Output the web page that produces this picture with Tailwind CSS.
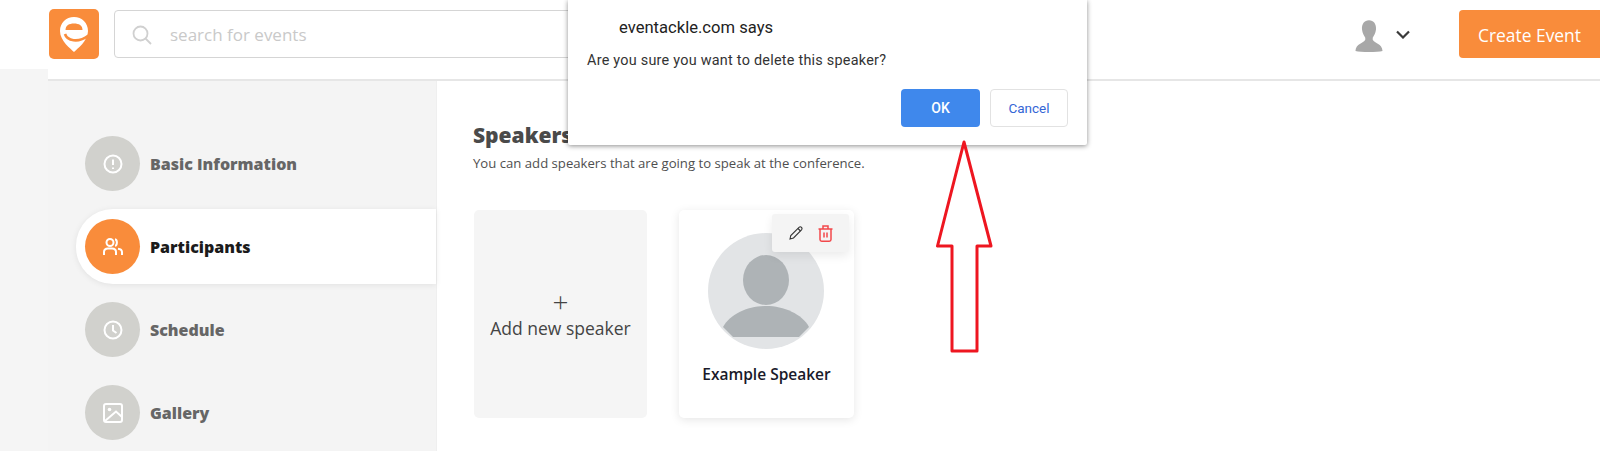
<!DOCTYPE html>
<html><head><meta charset="utf-8"><script src="https://cdn.jsdelivr.net/npm/@tailwindcss/browser@4"></script></head>
<body class="overflow-hidden">
<div class="relative flex w-[1600px] h-[451px] overflow-hidden bg-[#f5f5f5] font-['Open_Sans',sans-serif]">
  <div class="w-[48px] shrink-0"><div class="h-[69px] bg-white"></div></div>
  <div class="flex-1 flex flex-col min-w-0">
    <header class="h-[81px] shrink-0 bg-white border-b-2 border-[#e6e6e6] flex items-start pt-[10px]">
      <div class="w-[50px] h-[50px] mt-[-1px] ml-[1px] rounded-[5px] bg-[#f98c3b] flex items-center justify-center shrink-0">
        <svg width="28" height="35" viewBox="0 0 28 35"><path d="M14 35C11 32 0 24 0 14C0 6 6 0 14 0C22 0 28 6 28 14C28 24 17 32 14 35Z" fill="#fff"/><path d="M5.500 13C5.500 8.500 9 6.500 14 6.500C19 6.500 22.500 8.500 22.500 13Z" fill="#f98c3b"/><path d="M5 17C7 23.500 18 26.500 28.500 18.500" fill="none" stroke="#f98c3b" stroke-width="2.600"/></svg>
      </div>
      <div class="ml-[15px] w-[500px] h-[48px] border border-[#d5d5d5] rounded-[4px] flex items-center pl-[17px] pt-[2px] text-[17px] text-[#c9c9c9] shrink-0">
        <svg width="20" height="20" viewBox="0 0 20 20" fill="none" stroke="#d0d0d0" stroke-width="1.800"><circle cx="8.500" cy="8.500" r="7"/><path d="M13.500 13.500L19 19"/></svg>
        <span class="ml-[18px]">search for events</span>
      </div>
      <div class="ml-auto flex items-center h-[48px]">
        <svg width="28" height="34" viewBox="0 0 30 34" class="mt-[3px]"><path d="M15 0C20 0 23 4 22.500 10C22 14 20 17 19 19V21C21 25 29 25 29.500 33C24 34.500 6 34.500 .5 33C1 25 9 25 11 21V19C10 17 8 14 7.500 10C7 4 10 0 15 0Z" fill="#a8a8a8"/></svg>
        <svg width="14" height="9" viewBox="0 0 14 9" fill="none" stroke="#3a3a3a" stroke-width="2.200" class="ml-[13px]"><path d="M1 1.500L7 7.500L13 1.500"/></svg>
        <div class="ml-[49px] w-[141px] h-[48px] pt-[2px] bg-[#f98c3b] rounded-l-[4px] flex items-center justify-center text-white text-[17.400px]">Create Event</div>
      </div>
    </header>
    <div class="flex-1 flex min-h-0">
      <aside class="w-[388px] shrink-0 bg-[#f4f4f4] pt-[55px] pl-[28px] font-extrabold text-[16px] text-[#666]">
        <div class="flex flex-col gap-[28px]">
          <div class="flex items-center h-[55px] pl-[9px] gap-[10px]">
            <div class="w-[55px] h-[55px] rounded-full bg-[#d1d1cd] flex items-center justify-center"><svg width="20" height="20" viewBox="0 0 20 20" fill="none" stroke="#fff" stroke-width="2"><circle cx="10" cy="10" r="8.500"/><path d="M10 5.500V11M10 13.500V15"/></svg></div>
            <span>Basic Information</span>
          </div>
          <div class="relative flex items-center h-[55px] pl-[9px] gap-[10px] text-[#1b1b1b]">
            <div class="absolute left-0 right-0 top-[-10px] bottom-[-10px] bg-white rounded-l-[37px] shadow-[0_1px_6px_rgba(0,0,0,0.08)]"></div>
            <div class="relative w-[55px] h-[55px] rounded-full bg-[#f98c3b] flex items-center justify-center"><svg width="20" height="18" viewBox="0 0 20 18" fill="none" stroke="#fff" stroke-width="2"><circle cx="7" cy="4.500" r="3.500"/><path d="M1 17V14C1 11.500 3 10.500 5 10.500H9C11 10.500 13 11.500 13 14V17M12 1.200C14.500 1.500 14.500 7.500 12 7.800M15 10.700C17.500 11 19 12 19 14V17"/></svg></div>
            <span class="relative">Participants</span>
          </div>
          <div class="flex items-center h-[55px] pl-[9px] gap-[10px]">
            <div class="w-[55px] h-[55px] rounded-full bg-[#d1d1cd] flex items-center justify-center"><svg width="20" height="20" viewBox="0 0 20 20" fill="none" stroke="#fff" stroke-width="2"><circle cx="10" cy="10" r="8.500"/><path d="M10 5V10.500L13.500 13"/></svg></div>
            <span>Schedule</span>
          </div>
          <div class="flex items-center h-[55px] pl-[9px] gap-[10px]">
            <div class="w-[55px] h-[55px] rounded-full bg-[#d1d1cd] flex items-center justify-center"><svg width="20" height="20" viewBox="0 0 20 20" fill="none" stroke="#fff" stroke-width="2"><rect x="1" y="1" width="18" height="18" rx="2"/><circle cx="6.500" cy="6.500" r="1.800" fill="#fff" stroke="none"/><path d="M2 18L13 8.500L19 14"/></svg></div>
            <span>Gallery</span>
          </div>
        </div>
      </aside>
      <main class="flex-1 bg-white pl-[36px] pt-[40px] border-l border-[#efefef]">
        <h2 class="text-[21px] leading-[28px] font-extrabold text-[#4a4a4a]">Speakers</h2>
        <p class="mt-[5px] text-[13.150px] leading-[19px] text-[#4f4f4f]">You can add speakers that are going to speak at the conference.</p>
        <div class="mt-[37px] flex gap-[32px] pl-px">
          <div class="w-[173px] h-[208px] rounded-[5px] bg-[#f5f5f5] flex flex-col items-center justify-center text-[#444]">
            <span class="text-[28px] leading-[20px] font-light pt-[3px]">+</span>
            <span class="text-[17.500px] leading-[24px] mt-[5px]">Add new speaker</span>
          </div>
          <div class="relative w-[175px] h-[208px] rounded-[5px] bg-white shadow-[0_2px_10px_rgba(0,0,0,0.1)] flex flex-col items-center">
            <div class="mt-[23px] mr-[2px] w-[116px] h-[116px] rounded-full bg-[#e2e4e6] overflow-hidden">
              <svg width="116" height="116" viewBox="0 0 116 116"><ellipse cx="58" cy="47" rx="23" ry="25" fill="#aeb3b6"/><path d="M15 94C22 81 40 73 58 73C76 73 94 81 101 94L91 104H25Z" fill="#aeb3b6"/></svg>
            </div>
            <div class="mt-[14px] text-[15.500px] leading-[22px] font-semibold text-[#1a1a2a]">Example Speaker</div>
            <div class="absolute left-[93px] top-[4px] w-[77px] h-[38px] rounded-[3px] bg-[#f4f4f4] shadow-[0_4px_10px_rgba(0,0,0,0.08)] flex items-center justify-center gap-[15px]">
              <svg width="14" height="14" viewBox="0 0 14 14" fill="none" stroke="#333" stroke-width="1.100"><path d="M1 13L1.800 9.500L10 1.300C10.800 .6 11.800 .6 12.500 1.400C13.200 2.200 13.200 3 12.500 3.800L4.500 12Z"/><path d="M9 2.500L11.500 5"/></svg>
              <svg width="15" height="17" viewBox="0 0 15 17" fill="none" stroke="#f2484b" stroke-width="1.500"><path d="M0.500 4H14.500M5 4V1H10V4M2 4V14.500C2 15.500 2.700 16.200 3.700 16.200H11.300C12.300 16.200 13 15.500 13 14.500V4M6 7.500V12.500M9 7.500V12.500"/></svg>
            </div>
          </div>
        </div>
      </main>
    </div>
  </div>
  <div class="absolute left-[568px] top-0 w-[519px] h-[145px] bg-white rounded-b-[2px] shadow-[0_1px_5px_rgba(0,0,0,0.45)] font-['Roboto',sans-serif]">
    <div class="absolute left-[51px] top-[18px] text-[16.600px] leading-[20px] text-[#222]">eventackle.com says</div>
    <div class="absolute left-[19px] top-[52px] text-[14.400px] leading-[18px] text-[#333] tracking-[0.25px]">Are you sure you want to delete this speaker?</div>
    <div class="absolute right-[19px] top-[89px] flex gap-[10px] text-[14px] font-medium">
      <div class="w-[79px] h-[38px] rounded-[4px] bg-[#3f88ec] text-white flex items-center justify-center">OK</div>
      <div class="w-[78px] h-[38px] rounded-[4px] bg-white border border-[#e2e2e2] text-[#3566d6] text-[13.500px] flex items-center justify-center font-normal">Cancel</div>
    </div>
  </div>
  <svg class="absolute left-[930px] top-[136px]" width="70" height="224" viewBox="930 136 70 224" fill="none" stroke="#ee1620" stroke-width="3" stroke-linejoin="round"><path d="M964 142L937.500 246H952V351H977V246H991Z"/></svg>
</div>
</body></html>
